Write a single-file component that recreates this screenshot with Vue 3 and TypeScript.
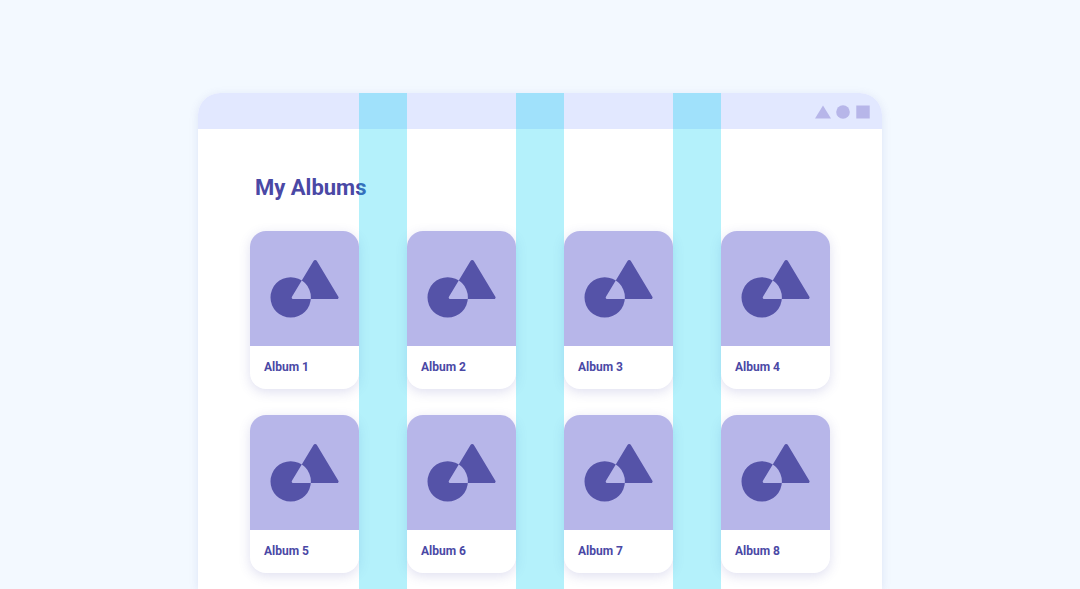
<script setup lang="ts">
interface Album {
  id: number
  title: string
}

const albums: Album[] = Array.from({ length: 8 }, (_, i) => ({
  id: i + 1,
  title: `Album ${i + 1}`,
}))
</script>

<template>
  <div class="page">
    <main class="window">
      <header class="bar">
        <svg class="controls" width="56" height="14" viewBox="0 0 56 14" aria-hidden="true">
          <path d="M9 0.500L17 13.500H1Z" />
          <circle cx="29" cy="7" r="6.800" />
          <rect x="42.300" y="0.500" width="13.400" height="13" />
        </svg>
      </header>

      <section class="content">
        <h1 class="title">My Albums</h1>
        <ul class="albums">
          <li v-for="album in albums" :key="album.id" class="card">
            <div class="cover">
              <svg class="art" width="70" height="60" viewBox="0 0 70 60" aria-hidden="true">
                <path
                  fill-rule="evenodd"
                  d="M20.700 18.200a20.200 20.200 0 1 0 0 40.400a20.200 20.200 0 1 0 0-40.400ZM43.500 1.900a2 2 0 0 1 3.400 0L68.200 37.500a1.600 1.600 0 0 1-1.400 2.600H23.500a1.600 1.600 0 0 1-1.400-2.600Z"
                />
              </svg>
            </div>
            <h2 class="name">{{ album.title }}</h2>
          </li>
        </ul>
      </section>

      <div class="gutters" aria-hidden="true">
        <span class="gutter first"></span>
        <span class="gutter second"></span>
        <span class="gutter third"></span>
      </div>
    </main>
  </div>
</template>

<style>
body {
  margin: 0;
  background: #f3f9ff;
}
</style>

<style scoped>
.page {
  box-sizing: border-box;
  display: flex;
  justify-content: center;
  height: 100vh;
  padding: 93px 24px 0;
  overflow: hidden;
  background: #f3f9ff;
  font-family: Roboto, "Liberation Sans", sans-serif;
  color: #4a48a5;
}

.window {
  position: relative;
  flex: 1;
  max-width: 684px;
  background: #fff;
  border-radius: 22px 22px 0 0;
  box-shadow: 0 2px 10px rgba(90, 100, 190, 0.14);
}

.bar {
  box-sizing: border-box;
  display: flex;
  align-items: center;
  justify-content: flex-end;
  height: 36px;
  padding: 2px 12px 0;
  background: #e2e8ff;
  border-radius: 22px 22px 0 0;
}

.controls {
  fill: #b7b6e9;
}

.content {
  padding: 43px 52px 26px;
}

.title {
  margin: 0 0 27px;
  padding-left: 5px;
  font-size: 22px;
  line-height: 32px;
  font-weight: 700;
}

.albums {
  display: grid;
  grid-template-columns: repeat(4, 1fr);
  gap: 26px 48px;
  margin: 0;
  padding: 0;
  list-style: none;
}

.card {
  overflow: hidden;
  background: #fff;
  border-radius: 16px;
  box-shadow: 0 3px 12px rgba(80, 75, 170, 0.18);
}

.cover {
  display: flex;
  align-items: center;
  justify-content: center;
  height: 115px;
  background: #b7b6e9;
}

.art {
  fill: #5553a8;
}

.name {
  margin: 0;
  padding: 0 14px;
  font-size: 12px;
  line-height: 43px;
  font-weight: 700;
}

/* Translucent bands that mark the gaps between the album columns */
.gutters {
  position: absolute;
  inset: 0 52px;
  display: grid;
  grid-template-columns: 1fr 48px 1fr 48px 1fr 48px 1fr;
  pointer-events: none;
}

.gutter {
  background: rgba(5, 208, 242, 0.3);
}

.first {
  grid-column: 2;
}

.second {
  grid-column: 4;
}

.third {
  grid-column: 6;
}
</style>
